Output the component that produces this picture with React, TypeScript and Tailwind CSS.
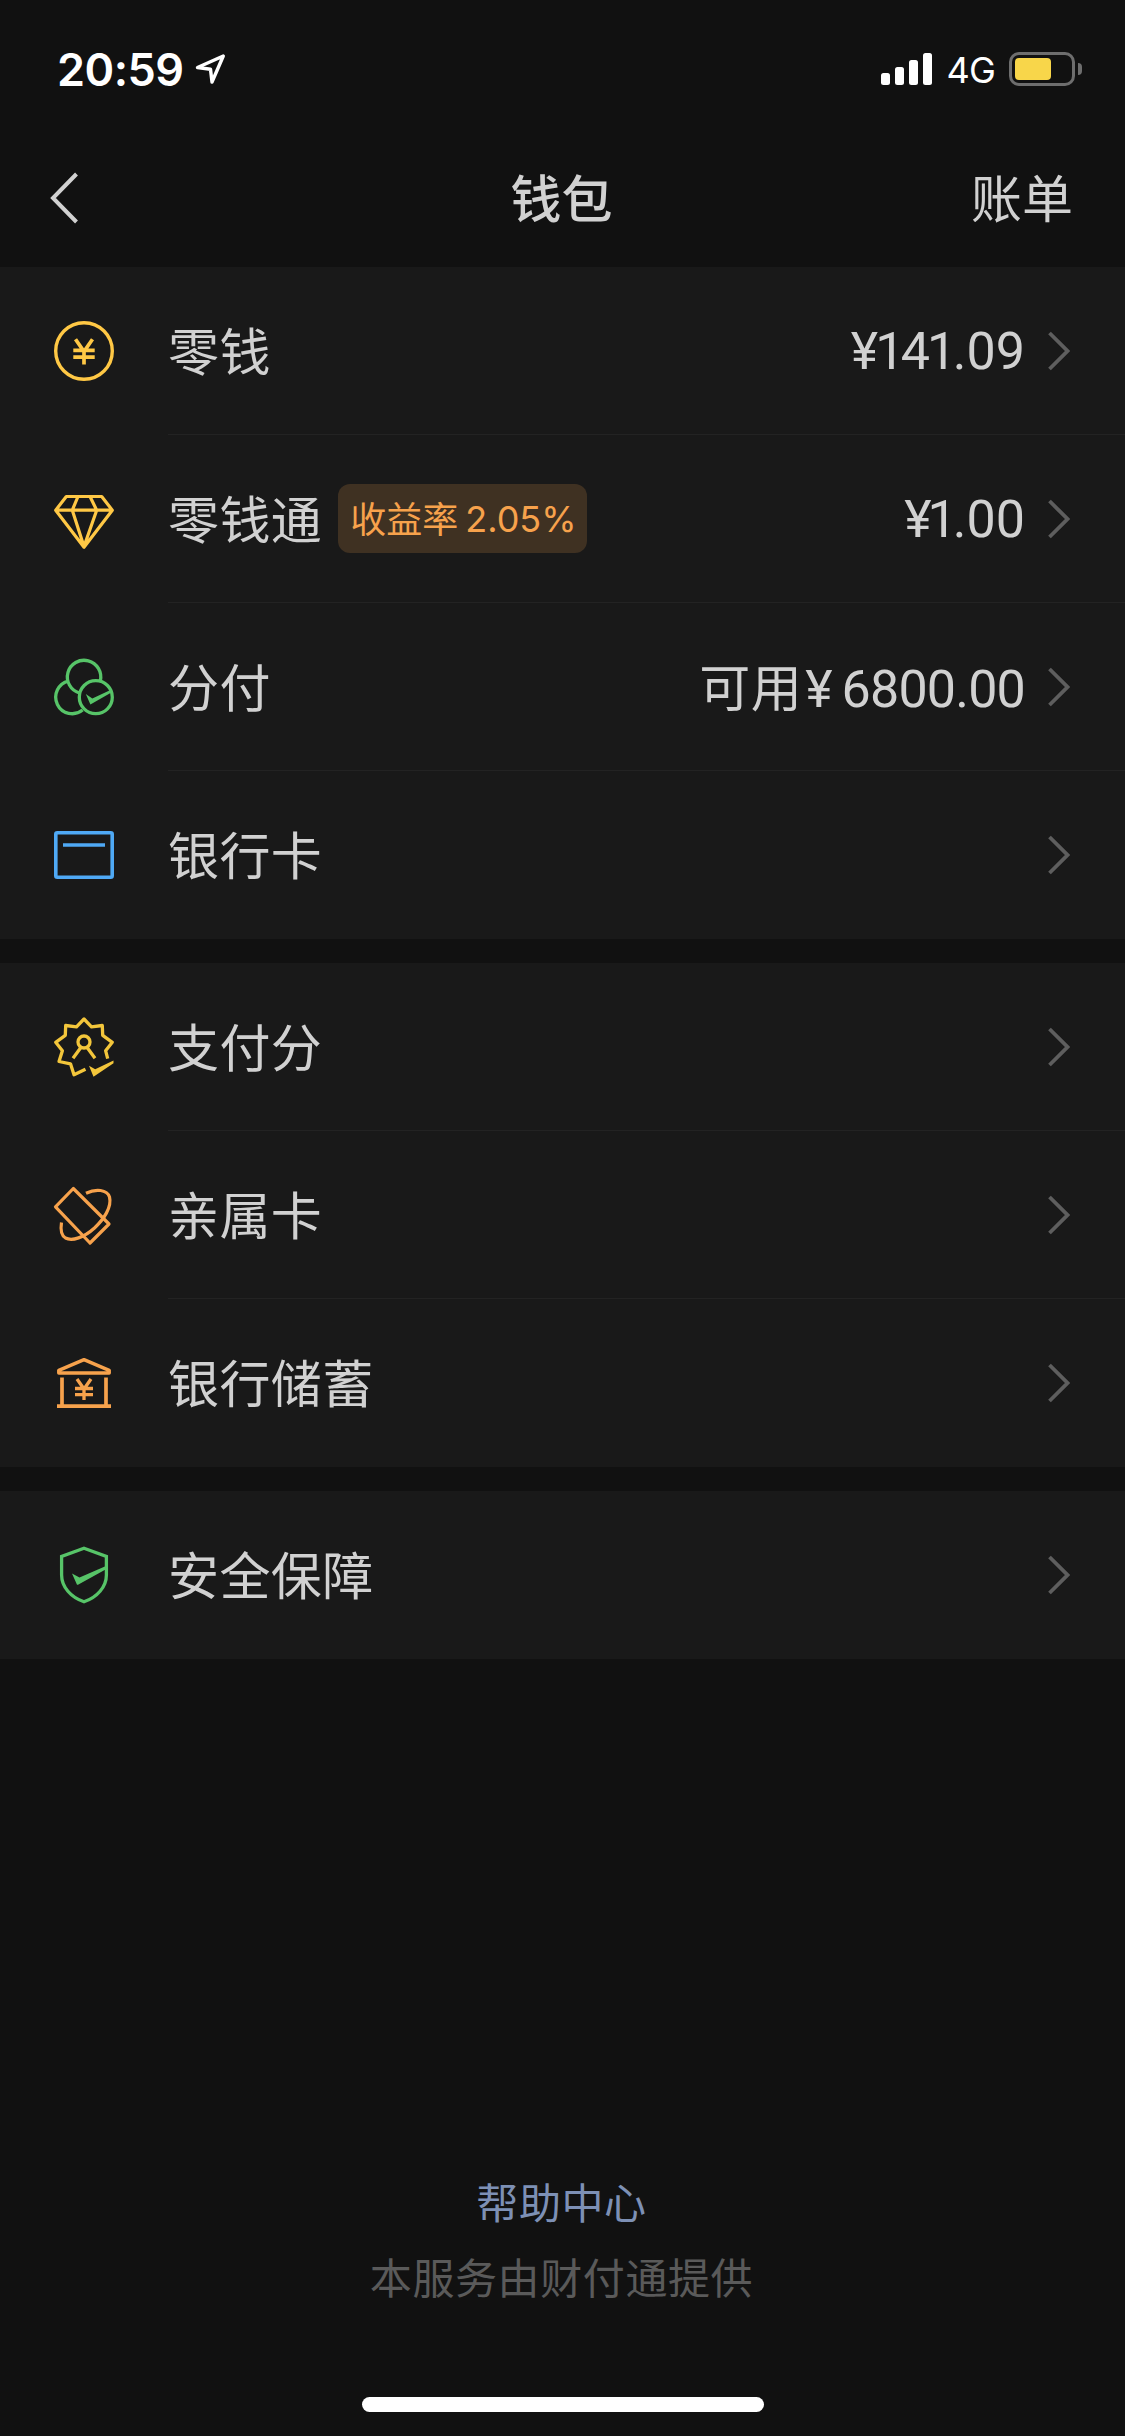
import type { ReactNode } from "react";

const YELLOW = "#FFC845";
const ORANGE = "#F7A24C";
const GREEN = "#57C468";
const BLUE = "#4FA9F5";

function Icon({ children }: { children: ReactNode }) {
  return (
    <svg width="72" height="72" viewBox="0 0 72 72" fill="none" className="shrink-0">
      {children}
    </svg>
  );
}

const CoinIcon = () => (
  <Icon>
    <circle cx="36" cy="36" r="28.3" stroke={YELLOW} strokeWidth="3.4" />
    <path d="M27.5 24.3 L36 36.5 L44.5 24.3 M25.3 35.3H46.7 M25.3 42.2H46.7 M36 36V49.6" stroke={YELLOW} strokeWidth="3.7" />
  </Icon>
);

const DiamondIcon = () => (
  <Icon>
    <path d="M18.3 13.5H53.7L64.3 27.2L36 64.2L7.7 27.2Z M7.5 27.2H64.5 M30 13.5L24.3 27.2L36 63.5L48.7 27.2L42 13.5" stroke={YELLOW} strokeWidth="3.2" strokeLinejoin="round" />
  </Icon>
);

const CirclesIcon = () => (
  <Icon>
    <path d="M31.3 42A16.7 16.7 0 1 1 52.3 29.9" stroke={GREEN} strokeWidth="3.3" />
    <path d="M20.5 30.1A16.5 16.5 0 1 0 34.6 59" stroke={GREEN} strokeWidth="3.3" />
    <circle cx="47.8" cy="46.2" r="16.5" stroke={GREEN} strokeWidth="3.3" />
    <path d="M37.8 43L44.3 47.5L62.5 39V42L42.4 53.6Z" fill={GREEN} />
  </Icon>
);

const CardIcon = () => (
  <Icon>
    <rect x="7.8" y="13.8" width="56.4" height="44.4" rx="1.5" stroke={BLUE} strokeWidth="3.6" />
    <path d="M15 26H57" stroke={BLUE} strokeWidth="3.6" />
  </Icon>
);

const ScoreIcon = () => (
  <Icon>
    <path
      d="M59.7 47.7L57.6 39.7L64.3 31.3L54.7 24.3L54.3 14.5L43.5 15.8L36 8L28.5 15.8L17.7 14.5L17.3 24.3L7.7 31.3L14.4 39.7L11 50.5L22.5 52.8L26 63.8L37.5 58.3"
      stroke="#F3C63B"
      strokeWidth="3.3"
      strokeLinejoin="round"
    />
    <circle cx="36" cy="31" r="6" stroke="#F3C63B" strokeWidth="3.3" />
    <path d="M32.5 37L25 47.3 M39.5 37L47 47.3" stroke="#F3C63B" strokeWidth="3.3" />
    <path d="M41 54.8L47.2 58.2L65.5 49.6V52.2L45.5 65.8Z" fill="#F3C63B" />
  </Icon>
);

const FamilyCardIcon = () => (
  <Icon>
    <path d="M25.3 9.5L61 45L42 64L7.5 27.8Z" stroke={ORANGE} strokeWidth="3.2" strokeLinejoin="round" />
    <path d="M38 14.2C48 9.5 59 10.5 61.5 18C64 28 56 40 46.5 49C36 58.5 24 62.5 17.5 59C12.5 56 12.5 50 13.5 43.5" stroke={ORANGE} strokeWidth="3.2" />
  </Icon>
);

const BankIcon = () => (
  <Icon>
    <path d="M10.8 26V23.3L36 12.7L61.2 23.3V26Z" stroke={ORANGE} strokeWidth="3.5" strokeLinejoin="round" />
    <path d="M9 59.2H63 M14 30.5V59 M58 30.5V59" stroke={ORANGE} strokeWidth="3.7" />
    <path d="M29 32L36 42L43 32 M27 41.5H45 M27 47.7H45 M36 41.5V53" stroke={ORANGE} strokeWidth="3.3" />
  </Icon>
);

const ShieldIcon = () => (
  <Icon>
    <path d="M36 9.2L58.4 17.4V36C58.4 48 49 58.5 36 62.8C23 58.5 13.6 48 13.6 36V17.4Z" stroke={GREEN} strokeWidth="3.3" />
    <path d="M24 34.5L31.5 38.5L58 27V30.2L30 45.7H29Z" fill={GREEN} />
  </Icon>
);

type RowData = { icon: ReactNode; label: string; badge?: ReactNode; value?: ReactNode };

const groups: RowData[][] = [
  [
    {
      icon: <CoinIcon />,
      label: "零钱",
      value: (
        <span>
          ¥<span className="-ml-[3px] -mr-[3.5px]">1</span>4<span className="-ml-[3px] -mr-[3.5px]">1</span>.09
        </span>
      ),
    },
    {
      icon: <DiamondIcon />,
      label: "零钱通",
      badge: (
        <span className="ml-[16px] flex h-[69px] w-[249px] items-center rounded-xl bg-[#3F3122] pl-[12px] text-[36px] leading-none text-[#F7A24C]">
          <span className="-mt-[3px]">收益率</span>
          <span className="ml-[7px] font-['Inter']">2.05%</span>
        </span>
      ),
      value: (
        <span>
          ¥<span className="-ml-[4px] -mr-[4px]">1</span>.00
        </span>
      ),
    },
    {
      icon: <CirclesIcon />,
      label: "分付",
      value: (
        <>
          <span className="font-['Noto_Sans_CJK_SC'] text-[51px] tracking-[0.5px]">可用</span>
          <span className="ml-[3px]">¥</span>
          <span className="ml-[9px] tracking-[-0.8px]">6800.00</span>
        </>
      ),
    },
    { icon: <CardIcon />, label: "银行卡" },
  ],
  [
    { icon: <ScoreIcon />, label: "支付分" },
    { icon: <FamilyCardIcon />, label: "亲属卡" },
    { icon: <BankIcon />, label: "银行储蓄" },
  ],
  [{ icon: <ShieldIcon />, label: "安全保障" }],
];

function Row({ icon, label, badge, value, divided }: RowData & { divided: boolean }) {
  return (
    <div className="flex h-[168px] items-center pl-12">
      {icon}
      <div className={`ml-12 flex h-full flex-1 items-center border-b pr-[55px] ${divided ? "border-[#232323]" : "border-transparent"}`}>
        <span className="pb-[3px] text-[51px] leading-none tracking-[0.4px] text-[#D1D1D1]">{label}</span>
        {badge}
        <span className="ml-auto flex items-baseline pt-[2px] font-['Roboto'] text-[52px] leading-none text-[#D1D1D1]">{value}</span>
        <svg width="22" height="40" viewBox="0 0 22 40" fill="none" className="ml-[23px] shrink-0">
          <path d="M1.5 2L19.5 20L1.5 38" stroke="#5E5E5E" strokeWidth="3.8" />
        </svg>
      </div>
    </div>
  );
}

function StatusBar() {
  return (
    <div className="flex h-[132px] items-start justify-between pl-[57px] pr-[43px] pt-[44px] font-['Inter'] text-white">
      <div className="flex h-[50px] items-center">
        <span className="text-[45px] font-semibold leading-none tracking-[-0.5px]">20:59</span>
        <svg width="32" height="32" viewBox="0 0 32 32" fill="none" className="ml-[11px]">
          <path d="M28.3 3L2.5 14.5L15.5 16.2L17 29Z" stroke="#fff" strokeWidth="3.4" strokeLinejoin="round" />
        </svg>
      </div>
      <div className="flex h-[50px] items-center">
        <div className="flex h-8 items-end gap-[5px]">
          <i className="h-3 w-[9px] rounded-[2.5px] bg-white" />
          <i className="h-[18px] w-[9px] rounded-[2.5px] bg-white" />
          <i className="h-[25px] w-[9px] rounded-[2.5px] bg-white" />
          <i className="h-8 w-[9px] rounded-[2.5px] bg-white" />
        </div>
        <span className="ml-[14px] pt-[2px] text-[36px] leading-none tracking-[-0.8px]">4G</span>
        <div className="ml-[14px] flex h-[34px] w-[66px] items-center rounded-[10px] border-[3px] border-[#6E6E6E] pl-[3px]">
          <div className="h-[22px] w-9 rounded-[4px] bg-[#F8D64A]" />
        </div>
        <div className="ml-[3px] h-[12px] w-[4px] rounded-r-full bg-[#6E6E6E]" />
      </div>
    </div>
  );
}

export default function App() {
  return (
    <div className="flex h-[2436px] w-[1125px] flex-col overflow-hidden bg-[#111111] font-['Noto_Sans_CJK_SC',sans-serif]">
      <StatusBar />
      <header className="grid h-[135px] grid-cols-3 items-center pb-[4px] pl-[50px] pr-[52px] text-[#D1D1D1]">
        <svg width="30" height="52" viewBox="0 0 30 52" fill="none">
          <path d="M26.5 2L3 26L26.5 50" stroke="#D1D1D1" strokeWidth="4" />
        </svg>
        <h1 className="pb-[2px] text-center text-[51px] font-medium leading-none">钱包</h1>
        <span className="pb-[2px] text-right text-[51px] leading-none">账单</span>
      </header>
      <main className="flex flex-col gap-6">
        {groups.map((rows, g) => (
          <section key={g} className="bg-[#191919]">
            {rows.map((row, i) => (
              <Row key={row.label} {...row} divided={i < rows.length - 1} />
            ))}
          </section>
        ))}
      </main>
      <footer className="mt-auto flex flex-col items-center pb-[24px] text-[42px] leading-none tracking-[0.6px]">
        <a className="pr-[2px] text-[#7D90B5]">帮助中心</a>
        <p className="mt-[33px] pr-[2px] text-[#5A5A5A]">本服务由财付通提供</p>
        <div className="mt-[100px] h-[15px] w-[402px] rounded-full bg-white" />
      </footer>
    </div>
  );
}
